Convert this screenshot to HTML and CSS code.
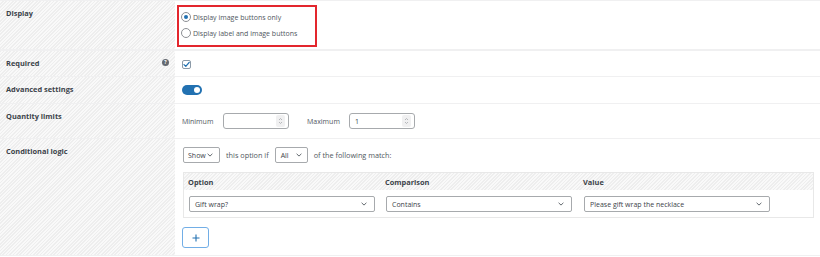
FILE: index.html
```html
<!DOCTYPE html>
<html>
<head>
<meta charset="utf-8">
<link rel="stylesheet" href="styles.css">
</head>
<body>
<div class="settings">
  <div class="row row-display">
    <div class="label">Display</div>
    <div class="field field-display">
      <div class="highlight">
        <div class="radio-opt"><span class="radio checked"></span>Display image buttons only</div>
        <div class="radio-opt"><span class="radio"></span>Display label and image buttons</div>
      </div>
    </div>
  </div>
  <div class="row row-required">
    <div class="label label-help"><span>Required</span><span class="help">?</span></div>
    <div class="field">
      <span class="checkbox"><svg viewBox="0 0 9 9" width="9" height="9"><path d="M2 4.6 L3.8 6.4 L7.2 2.4" fill="none" stroke="#2271b1" stroke-width="1.3" stroke-linecap="round" stroke-linejoin="round"/></svg></span>
    </div>
  </div>
  <div class="row row-advanced">
    <div class="label">Advanced settings</div>
    <div class="field"><span class="toggle"><span class="knob"></span></span></div>
  </div>
  <div class="row row-qty">
    <div class="label">Quantity limits</div>
    <div class="field">
      <span class="qty-label">Minimum</span>
      <span class="num-input"><span class="num-val"></span><span class="spin"><svg viewBox="0 0 9 12" width="9" height="12"><path d="M3 5 L4.5 3.5 L6 5 M3 7 L4.5 8.5 L6 7" fill="none" stroke="#a7aaad" stroke-width="0.8"/></svg></span></span>
      <span class="qty-label qty-max">Maximum</span>
      <span class="num-input"><span class="num-val">1</span><span class="spin"><svg viewBox="0 0 9 12" width="9" height="12"><path d="M3 5 L4.5 3.5 L6 5 M3 7 L4.5 8.5 L6 7" fill="none" stroke="#a7aaad" stroke-width="0.8"/></svg></span></span>
    </div>
  </div>
  <div class="row row-cond">
    <div class="label">Conditional logic</div>
    <div class="field field-cond">
      <div class="cond-line">
        <span class="select select-show"><span>Show</span><svg class="chev" viewBox="0 0 6 4" width="6" height="4"><path d="M0.6 0.8 L3 3.1 L5.4 0.8" fill="none" stroke="#50575e" stroke-width="0.9"/></svg></span>
        <span class="cond-text">this option if</span>
        <span class="select select-all"><span>All</span><svg class="chev" viewBox="0 0 6 4" width="6" height="4"><path d="M0.6 0.8 L3 3.1 L5.4 0.8" fill="none" stroke="#50575e" stroke-width="0.9"/></svg></span>
        <span class="cond-text">of the following match:</span>
      </div>
      <div class="cond-table">
        <div class="cond-head">
          <div class="th">Option</div>
          <div class="th">Comparison</div>
          <div class="th">Value</div>
        </div>
        <div class="cond-body">
          <div class="td"><span class="select select-wide"><span>Gift wrap?</span><svg class="chev" viewBox="0 0 6 4" width="6" height="4"><path d="M0.6 0.8 L3 3.1 L5.4 0.8" fill="none" stroke="#50575e" stroke-width="0.9"/></svg></span></div>
          <div class="td"><span class="select select-wide"><span>Contains</span><svg class="chev" viewBox="0 0 6 4" width="6" height="4"><path d="M0.6 0.8 L3 3.1 L5.4 0.8" fill="none" stroke="#50575e" stroke-width="0.9"/></svg></span></div>
          <div class="td"><span class="select select-wide"><span>Please gift wrap the necklace</span><svg class="chev" viewBox="0 0 6 4" width="6" height="4"><path d="M0.6 0.8 L3 3.1 L5.4 0.8" fill="none" stroke="#50575e" stroke-width="0.9"/></svg></span></div>
        </div>
      </div>
      <div class="add-line">
        <span class="add-btn"><svg viewBox="0 0 8 8" width="8" height="8"><path d="M4 0.5 V7.5 M0.5 4 H7.5" stroke="#2271b1" stroke-width="1.1"/></svg></span>
      </div>
    </div>
  </div>
</div>
</body>
</html>
```

FILE: styles.css
```css
html, body {
  margin: 0;
  padding: 0;
  background: #ffffff;
}

body {
  font-family: "Open Sans", "Noto Sans", sans-serif;
  font-size: 7px;
  color: #50575e;
  width: 820px;
  height: 257px;
  overflow: hidden;
}

.settings {
  border-top: 1px solid #f0f0f1;
}

.row {
  display: grid;
  grid-template-columns: 175px 1fr;
  border-bottom: 1px solid #f0f0f1;
  box-sizing: border-box;
}

.row-display { height: 50px; border-bottom-width: 2px; }
.row-required { height: 26px; }
.row-advanced { height: 27px; }
.row-qty { height: 35px; }
.row-cond { height: 117px; }

.label {
  background: repeating-linear-gradient(-45deg, #f9f9f9 0 1.2px, #eeeeee 1.2px 2.4px);
  padding: 7px 6px 0 6px;
  line-height: 11px;
  font-size: 7.4px;
  font-weight: 700;
  color: #3c434a;
}

.label-help {
  display: flex;
  justify-content: space-between;
  align-items: flex-start;
  padding-right: 6px;
}

.help {
  width: 7px;
  height: 7px;
  border-radius: 50%;
  background: #646970;
  color: #ffffff;
  font-size: 5px;
  line-height: 7px;
  text-align: center;
  margin-top: 1px;
}

.field {
  display: flex;
  align-items: center;
  padding-left: 7px;
}

/* Display row */
.field-display {
  align-items: flex-start;
  padding-left: 2px;
  padding-top: 4px;
}

.highlight {
  width: 140px;
  box-sizing: border-box;
  border: 2px solid #e3262d;
  padding: 2px 0 4px 2px;
  display: flex;
  flex-direction: column;
}

.radio-opt {
  height: 16px;
  display: flex;
  align-items: center;
  white-space: nowrap;
}

.radio {
  width: 10px;
  height: 10px;
  box-sizing: border-box;
  border: 1px solid #8c8f94;
  border-radius: 50%;
  margin-right: 2px;
  display: flex;
  align-items: center;
  justify-content: center;
  background: #ffffff;
}

.radio.checked::after {
  content: "";
  width: 4px;
  height: 4px;
  border-radius: 50%;
  background: #2271b1;
}

/* Required */
.checkbox {
  width: 9px;
  height: 9px;
  box-sizing: border-box;
  border: 1px solid #8c9aa8;
  border-radius: 2px;
  display: flex;
  align-items: center;
  justify-content: center;
  background: #ffffff;
  margin-top: 1px;
}

.checkbox svg {
  flex: none;
}

/* Toggle */
.toggle {
  width: 20px;
  height: 10px;
  border-radius: 5px;
  background: #2271b1;
  display: flex;
  align-items: center;
  justify-content: flex-end;
  padding-right: 2px;
  box-sizing: border-box;
}

.knob {
  width: 6px;
  height: 6px;
  border-radius: 50%;
  background: #ffffff;
}

/* Quantity */
.qty-label {
  margin-right: 9px;
  min-width: 32px;
}

.qty-max {
  margin-left: 18px;
  min-width: 33px;
}

.num-input {
  width: 66px;
  height: 16px;
  box-sizing: border-box;
  border: 1px solid #a7aaad;
  border-radius: 3px;
  display: flex;
  align-items: center;
  justify-content: space-between;
  padding: 0 3px 0 5px;
  color: #3c434a;
}

.spin {
  width: 9px;
  height: 12px;
  background: #f0f0f1;
  border-radius: 2px;
  display: flex;
}

/* Conditional */
.field-cond {
  flex-direction: column;
  align-items: stretch;
  padding: 8px 6px 0 8px;
}

.cond-line {
  display: flex;
  align-items: center;
  height: 16px;
}

.select {
  height: 16px;
  box-sizing: border-box;
  border: 1px solid #a7aaad;
  border-radius: 2px;
  display: flex;
  align-items: center;
  justify-content: space-between;
  padding: 0 6px 0 4px;
  background: #ffffff;
  color: #3c434a;
  white-space: nowrap;
}

.chev {
  flex: none;
}

.select-show { width: 37px; }
.select-all { width: 33px; padding-right: 5px; padding-left: 5px; }

.cond-text {
  margin: 0 6px;
  font-size: 7.3px;
}

.cond-table {
  margin-top: 9px;
  border: 1px solid #e8e8e8;
}

.cond-head {
  display: grid;
  grid-template-columns: 197px 198px 1fr;
  height: 17px;
  align-items: center;
  background: repeating-linear-gradient(-45deg, #f9f9f9 0 1.2px, #eeeeee 1.2px 2.4px);
  font-weight: 700;
  font-size: 7.4px;
  color: #3c434a;
}

.th {
  padding-left: 4px;
}

.cond-body {
  display: grid;
  grid-template-columns: 197px 198px 1fr;
  height: 27px;
  box-sizing: border-box;
  padding-top: 6px;
}

.td {
  padding-left: 5px;
}

.select-wide {
  width: 186px;
  padding-left: 5px;
  padding-right: 7px;
}

.add-line {
  display: flex;
  margin-top: 9px;
}

.add-btn {
  width: 27px;
  height: 21px;
  box-sizing: border-box;
  border: 1px solid #72aee6;
  border-radius: 3px;
  display: flex;
  align-items: center;
  justify-content: center;
  margin-left: -1px;
}
```
